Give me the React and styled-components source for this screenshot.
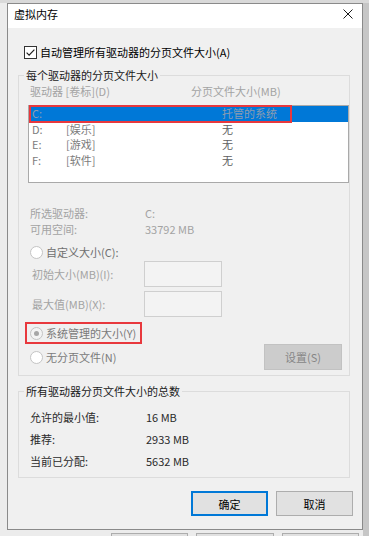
import React from 'react'
import styled, {createGlobalStyle} from 'styled-components'

const GlobalStyle = createGlobalStyle`
html, body { margin:0; padding:0; }
body {
  width:369px;
  height:536px;
  overflow:hidden;
  font-family: "Noto Sans CJK SC", "Noto Sans", sans-serif;
  font-size:11px;
  color:#000;
  background: linear-gradient(to right, #ececec 363px, #c6c6c6 363px);
}
* { box-sizing:border-box; }
`;

const Desktop = styled.div`
height:536px;
padding:3px 0 0 7px;
background: linear-gradient(to bottom, #d9d9d9 3px, transparent 3px);
`;

const Dialog = styled.div`
width:356px;
height:527px;
border:1px solid #8a8a8a;
background:#f0f0f0;
display:flex;
flex-direction:column;
`;

const TitleBar = styled.div`
height:24px;
flex:none;
background:#fff;
display:flex;
align-items:center;
justify-content:space-between;
padding:0 9px 4px 6px;
line-height:16px;
`;

const Body = styled.div`
flex:1;
display:flex;
flex-direction:column;
padding:16px 12px 0 10px;
`;

const CheckRow = styled.label`
display:flex;
align-items:center;
gap:3px;
height:16px;
margin-left:6px;
line-height:16px;
`;

const Group = styled.fieldset`
margin:${p => p.top}px 0 0 0;
padding:0;
min-width:0;
border:1px solid #dcdcdc;
`;

const Legend = styled.legend`
margin-left:5px;
padding:0 2px;
height:16px;
line-height:16px;
color:#1a1a1a;
`;

const GroupInner = styled.div`
display:flex;
flex-direction:column;
padding:${p => p.pad};
`;

const Header = styled.div`
display:grid;
grid-template-columns:161px 1fr;
height:16px;
line-height:16px;
padding-left:2px;
color:#a3a3a3;
`;

const ListBox = styled.div`
margin-top:6px;
height:78px;
background:#fff;
border:1px solid #a9a9a9;
`;

const ListRow = styled.div`
height:15.5px;
background:${p => (p.selected ? '#0078d7' : 'transparent')};
display:flex;
align-items:center;
`;

const Marked = styled.div`
margin-left:1px;
width:261px;
height:100%;
display:flex;
align-items:center;
outline:${p => (p.on ? '2px solid #e8383d' : 'none')};
outline-offset:-1px;
`;

const Cols = styled.div`
display:grid;
grid-template-columns:34px 156px 1fr;
padding-left:${p => p.pad}px;
width:100%;
line-height:15px;
color:${p => (p.selected ? '#8c9cb0' : '#7c7c7c')};
`;

const SizeCell = styled.span`
color:${p => (p.selected ? '#8c9cb0' : '#5e5e5e')};
`;

const InfoRow = styled.div`
display:grid;
grid-template-columns:${p => p.label}px 1fr;
height:${p => p.h}px;
align-items:center;
margin-top:${p => p.top || 0}px;
padding-left:${p => p.pad}px;
color:${p => p.color};
`;

const RadioRow = styled.label`
display:flex;
align-items:center;
gap:3px;
height:16px;
width:fit-content;
margin-top:${p => p.top || 0}px;
padding:0 3px 0 2px;
line-height:16px;
color:${p => p.color};
outline:${p => (p.marked ? '2px solid #e8383d' : 'none')};
outline-offset:1px;
`;

const Radio = styled.span`
width:13px;
height:13px;
border-radius:50%;
border:1px solid #c4c4c4;
background:${p => (p.checked ? '#f3f3f3' : '#fff')};
display:flex;
align-items:center;
justify-content:center;
&::after {
  content:'';
  display:${p => (p.checked ? 'block' : 'none')};
  width:5px;
  height:5px;
  border-radius:50%;
  background:#a6a6a6;
}
`;

const FieldRow = styled.div`
display:grid;
grid-template-columns:112px 78px;
height:26px;
align-items:center;
margin-top:${p => p.top}px;
padding-left:4px;
color:#a3a3a3;
`;

const Field = styled.div`
height:26px;
border:1px solid #cfcfcf;
background:#f3f3f3;
`;

const LastRow = styled.div`
display:flex;
align-items:center;
justify-content:space-between;
height:26px;
margin-top:3px;
padding-right:7px;
`;

const Button = styled.button`
width:${p => p.w}px;
height:${p => p.h}px;
font-family:inherit;
font-size:11px;
padding:0;
color:${p => (p.disabled ? '#868686' : '#000')};
background:${p => (p.disabled ? '#cccccc' : '#e1e1e1')};
border:${p => (p.primary ? '2px solid #0078d7' : p.disabled ? '1px solid #c2c2c2' : '1px solid #adadad')};
`;

const ButtonRow = styled.div`
display:flex;
justify-content:flex-end;
gap:8px;
margin:13px -3px 0 0;
`;

const ParentButtons = styled.div`
display:flex;
gap:8px;
margin:3px 0 0 104px;
`;

const ParentButton = styled.div`
width:${p => p.w}px;
height:3px;
border:1px solid #adadad;
border-bottom:none;
background:#e1e1e1;
`;

const CloseIcon = () => (
  <svg width="10" height="10" viewBox="0 0 10 10">
    <path d="M0.5 0.5 L9.5 9.5 M9.5 0.5 L0.5 9.5" stroke="#1a1a1a" strokeWidth="1" fill="none" />
  </svg>
)

const CheckBox = () => (
  <svg width="13" height="13" viewBox="0 0 13 13">
    <rect x="0.5" y="0.5" width="12" height="12" fill="#fff" stroke="#333" />
    <path d="M2.6 6.6 L5.1 9.1 L10.4 3.6" stroke="#1f1f1f" strokeWidth="1.2" fill="none" />
  </svg>
)

const drives = [
  {letter: 'C:', label: '', size: '托管的系统', selected: true},
  {letter: 'D:', label: '[娱乐]', size: '无'},
  {letter: 'E:', label: '[游戏]', size: '无'},
  {letter: 'F:', label: '[软件]', size: '无'}
]

const totals = [
  ['允许的最小值:', '16 MB'],
  ['推荐:', '2933 MB'],
  ['当前已分配:', '5632 MB']
]

export default function App() {
  return (
    <>
      <GlobalStyle />
      <Desktop>
        <Dialog>
          <TitleBar>
            <span>虚拟内存</span>
            <CloseIcon />
          </TitleBar>
          <Body>
            <CheckRow>
              <CheckBox />
              <span>自动管理所有驱动器的分页文件大小(A)</span>
            </CheckRow>

            <Group top={7}>
              <Legend>每个驱动器的分页文件大小</Legend>
              <GroupInner pad="0 0 5px 9px">
                <Header>
                  <span>驱动器 [卷标](D)</span>
                  <span>分页文件大小(MB)</span>
                </Header>
                <ListBox>
                  {drives.map(d => (
                    <ListRow key={d.letter} selected={d.selected}>
                      {d.selected ? (
                        <Marked on>
                          <Cols pad={2} selected>
                            <span>{d.letter}</span>
                            <span>{d.label}</span>
                            <SizeCell selected>{d.size}</SizeCell>
                          </Cols>
                        </Marked>
                      ) : (
                        <Cols pad={3}>
                          <span>{d.letter}</span>
                          <span>{d.label}</span>
                          <SizeCell>{d.size}</SizeCell>
                        </Cols>
                      )}
                    </ListRow>
                  ))}
                </ListBox>

                <InfoRow label={115} h={16} top={22} pad={2} color="#a3a3a3">
                  <span>所选驱动器:</span>
                  <span>C:</span>
                </InfoRow>
                <InfoRow label={115} h={16} pad={2} color="#a3a3a3">
                  <span>可用空间:</span>
                  <span>33792 MB</span>
                </InfoRow>

                <RadioRow top={7} color="#6f6f6f">
                  <Radio />
                  <span>自定义大小(C):</span>
                </RadioRow>
                <FieldRow top={1}>
                  <span>初始大小(MB)(I):</span>
                  <Field />
                </FieldRow>
                <FieldRow top={4}>
                  <span>最大值(MB)(X):</span>
                  <Field />
                </FieldRow>

                <RadioRow top={8} color="#7a7a7a" marked>
                  <Radio checked />
                  <span>系统管理的大小(Y)</span>
                </RadioRow>
                <LastRow>
                  <RadioRow color="#7a7a7a">
                    <Radio />
                    <span>无分页文件(N)</span>
                  </RadioRow>
                  <Button w={78} h={26} disabled>设置(S)</Button>
                </LastRow>
              </GroupInner>
            </Group>

            <Group top={7}>
              <Legend>所有驱动器分页文件大小的总数</Legend>
              <GroupInner pad="7px 0 5px 11px">
                {totals.map(([k, v]) => (
                  <InfoRow key={k} label={116} h={22} pad={0} color="#2a2a2a">
                    <span>{k}</span>
                    <span>{v}</span>
                  </InfoRow>
                ))}
              </GroupInner>
            </Group>

            <ButtonRow>
              <Button w={77} h={25} primary>确定</Button>
              <Button w={77} h={25}>取消</Button>
            </ButtonRow>
          </Body>
        </Dialog>
        <ParentButtons>
          <ParentButton w={77} />
          <ParentButton w={78} />
          <ParentButton w={77} />
        </ParentButtons>
      </Desktop>
    </>
  )
}
